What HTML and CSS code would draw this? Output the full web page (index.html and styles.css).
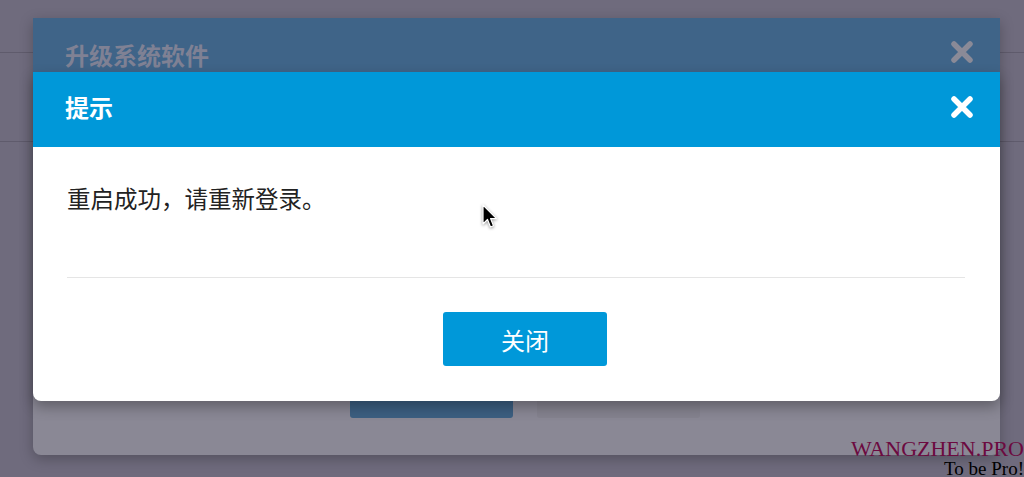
FILE: index.html
```html
<!DOCTYPE html>
<html lang="zh-CN">
<head>
  <meta charset="UTF-8" />
  <title>提示</title>
  <link rel="stylesheet" href="styles.css">
</head>
<body>

  <div class="page">
    <div class="page-row"></div>
    <div class="page-row second"></div>
  </div>

  <!-- 升级窗口（被遮住的那一层） -->
  <div class="modal modal-back">
    <div class="modal-header">
      <span class="modal-title">升级系统软件</span>
      <svg class="close" viewBox="0 0 24 24"><path d="M4 4 L20 20 M20 4 L4 20" /></svg>
    </div>
    <div class="modal-body"></div>
    <div class="modal-footer">
      <span class="btn-back primary"></span>
      <span class="btn-back"></span>
    </div>
  </div>

  <!-- 提示窗口 -->
  <div class="modal modal-front">
    <div class="modal-header">
      <span class="modal-title">提示</span>
      <svg class="close" viewBox="0 0 24 24"><path d="M4 4 L20 20 M20 4 L4 20" /></svg>
    </div>
    <div class="modal-body">
      <p>重启成功，请重新登录。</p>
    </div>
    <div class="modal-footer">
      <button type="button">关闭</button>
    </div>
  </div>

  <svg class="cursor" viewBox="0 0 16 26">
    <path d="M1 1 L1 20 L5.5 15.5 L8.5 23 L11.5 21.8 L8.6 14.6 L14.5 14.6 Z" />
  </svg>

  <div class="watermark">
    <div class="wm-name">WANGZHEN.PRO</div>
    <div class="wm-slogan">To be Pro!</div>
  </div>

</body>
</html>
```

FILE: styles.css
```css
* {
  box-sizing: border-box;
}
body {
  margin: 0;
  width: 1024px;
  height: 477px;
  overflow: hidden;
  background: #6f6b7d;
  font-family: "Noto Sans CJK SC", "Noto Sans", sans-serif;
  position: relative;
}

.page {
  padding-top: 52px;
}

.page-row {
  height: 0;
  border-top: 1px solid #5f5b6c;
}

.page-row.second {
  margin-top: 88px;
}

.modal {
  position: absolute;
  left: 33px;
  width: 967px;
  display: flex;
  flex-direction: column;
  border-radius: 0 0 8px 8px;
}

.modal-header {
  display: flex;
  align-items: center;
  justify-content: space-between;
  padding: 0 26px 0 32px;
}

.modal-title {
  font-size: 24px;
  font-weight: 700;
}

.close {
  width: 24px;
  height: 24px;
}

.close path {
  fill: none;
  stroke-width: 5.5;
  stroke-linecap: round;
}

/* back dialog */
.modal-back {
  top: 18px;
  height: 437px;
  background: #8a8895;
  box-shadow: 0 4px 14px rgb(0 0 0 / 0.25);
}

.modal-back .modal-header {
  height: 54px;
  background: #3f6488;
  align-items: flex-start;
  padding-top: 21px;
}

.modal-back .modal-title {
  color: #7f8194;
  line-height: 32px;
}

.modal-back .close {
  margin-top: 1px;
}

.modal-back .close path {
  stroke: #8a8a97;
}

.modal-back .modal-body {
  flex: 1;
}

.modal-back .modal-footer {
  display: flex;
  gap: 24px;
  padding: 0 0 37px 317px;
}

.btn-back {
  width: 163px;
  height: 54px;
  border-radius: 3px;
  background: #85838f;
}

.btn-back.primary {
  background: #3c5f82;
}

/* front dialog */
.modal-front {
  top: 72px;
  height: 329px;
  background: #fff;
  box-shadow: 0 6px 14px rgb(0 0 0 / 0.3);
}

.modal-front .modal-header {
  height: 75px;
  background: #0098d9;
  padding-bottom: 6px;
}

.modal-front .modal-title {
  color: #fff;
}

.modal-front .close path {
  stroke: #fff;
}

.modal-front .modal-body {
  margin: 0 35px 0 34px;
  padding: 37px 0 65px;
  border-bottom: 1px solid #e5e5e5;
}

.modal-front .modal-body p {
  margin: 0;
  font-size: 23.5px;
  line-height: 28px;
  color: #222;
}

.modal-front .modal-footer {
  display: flex;
  justify-content: center;
  padding: 34px 0 0 17px;
}

button {
  width: 164px;
  height: 54px;
  border: none;
  border-radius: 3px;
  background: #0098d9;
  color: #fff;
  font-family: inherit;
  font-size: 24px;
  cursor: pointer;
}

.cursor {
  position: absolute;
  left: 482px;
  top: 204px;
  width: 16px;
  height: 26px;
  filter: drop-shadow(0 1px 1.5px rgb(0 0 0 / 0.4));
}

.cursor path {
  fill: #000;
  stroke: #fff;
  stroke-width: 1.2;
  stroke-linejoin: round;
}

.watermark {
  position: absolute;
  right: 0;
  top: 439px;
  text-align: right;
  font-family: "Liberation Serif", serif;
}

.wm-name {
  font-size: 22px;
  line-height: 20px;
  color: #6c0a40;
}

.wm-slogan {
  font-size: 19px;
  line-height: 19px;
  color: #000;
}
```
